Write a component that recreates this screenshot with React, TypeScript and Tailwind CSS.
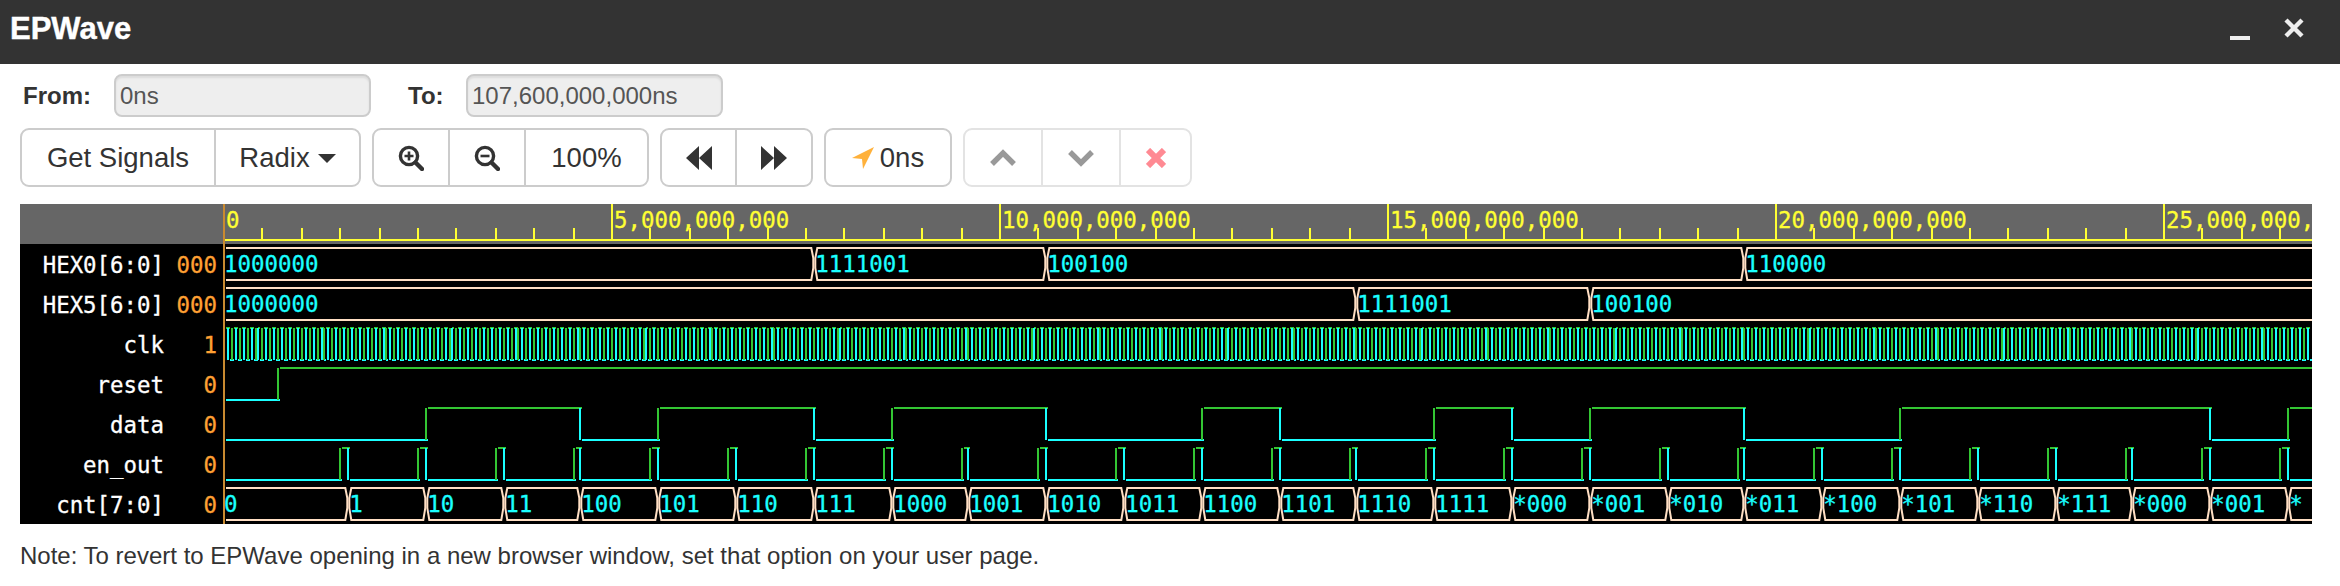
import React from "react"

const GREEN = "#33c633"
const CYAN = "#1affff"
const BUS = "#ffdfc4"
const YELLOW = "#ffff33"

const snap = (x: number) => Math.round(x / 2) * 2
const edgeAt = (i: number) => snap(224 + 3.88 * i)
const boundary = (k: number) => edgeAt(32 + 20 * k)

const END = 2312

// a digital row: edges are half-clock indexes, value toggles on each one
const DigitalWave = ({ row, start, edges }: { row: number; start: 0 | 1; edges: number[] }) => {
  const hi = 248 + row * 40
  const lo = 280 + row * 40
  const xs = edges.map(edgeAt)
  const parts: React.ReactNode[] = []
  let val = start
  let from = 226
  xs.forEach((x, n) => {
    const y = val ? hi : lo
    parts.push(<rect key={"h" + n} x={from} y={y - 1} width={x + 2 - from} height={2} fill={val ? GREEN : CYAN} />)
    parts.push(<rect key={"v" + n} x={x - 1} y={hi} width={2} height={lo - hi} fill={val ? CYAN : GREEN} />)
    from = x + 2
    val = val ? 0 : 1
  })
  const y = val ? hi : lo
  parts.push(<rect key="tail" x={from} y={y - 1} width={END - from} height={2} fill={val ? GREEN : CYAN} />)
  return <g shapeRendering="crispEdges">{parts}</g>
}

const BusWave = ({ row, values, at }: { row: number; values: string[]; at: number[] }) => {
  const y0 = 248 + row * 40
  const y1 = 280 + row * 40
  return (
    <g>
      {values.map((v, n) => {
        const a = n === 0 ? null : at[n - 1] + 0.3
        const b = n < at.length ? at[n] + 0.3 : null
        let d = a === null ? `M226 ${y0}` : `M${a + 3} ${y0}`
        d += b === null ? ` L${END + 4} ${y0} L${END + 4} ${y1}` : ` L${b - 3} ${y0} L${b - 1} ${y0 + 10} L${b - 1} ${y0 + 20} L${b - 3} ${y1}`
        d += a === null ? ` L226 ${y1}` : ` L${a + 3} ${y1} L${a + 1} ${y0 + 20} L${a + 1} ${y0 + 10} Z`
        return (
          <g key={n}>
            <path d={d} fill="none" stroke={BUS} strokeWidth={2} />
            <text x={a === null ? 224 : a + 1} y={y0 + 24} fill={CYAN} stroke={CYAN} strokeWidth={0.3} fontSize={22.4}>
              {v}
            </text>
          </g>
        )
      })}
    </g>
  )
}

const clkEdges = Array.from({ length: 537 }, (_, i) => i + 1)
const enEdges = Array.from({ length: 26 }, (_, k) => [30 + 20 * k, 32 + 20 * k]).flat()
const dataEdges = [1, 3, 4, 6, 7, 9, 11, 12, 14, 15, 16, 18, 20, 24, 25].map((k) => 32 + 20 * k)
const cntValues = ["0", "1", "10", "11", "100", "101", "110", "111", "1000", "1001", "1010", "1011", "1100", "1101", "1110", "1111", "*000", "*001", "*010", "*011", "*100", "*101", "*110", "*111", "*000", "*001", "*"]

const signals = [
  ["HEX0[6:0]", "000"],
  ["HEX5[6:0]", "000"],
  ["clk", "1"],
  ["reset", "0"],
  ["data", "0"],
  ["en_out", "0"],
  ["cnt[7:0]", "0"],
]

const Waves = () => (
  <svg width={2089} height={320} viewBox="223 204 2089 320" className="block font-['DejaVu_Sans_Mono',monospace]">
    <rect x={223} y={204} width={2089} height={320} fill="#000" />
    <rect x={223} y={204} width={2089} height={40} fill="#666" />
    <g fill={YELLOW} stroke={YELLOW} strokeWidth={0.3} fontSize={22.4}>
      {["0", "5,000,000,000", "10,000,000,000", "15,000,000,000", "20,000,000,000", "25,000,000,"].map((s, i) => (
        <text key={s} x={226 + i * 388} y={228}>
          {s}
        </text>
      ))}
    </g>
    <g fill={YELLOW} shapeRendering="crispEdges">
      <rect x={224} y={239} width={2088} height={2} />
      {Array.from({ length: 55 }, (_, i) => {
        const x = snap(224 + i * 38.8)
        return i % 10 === 0 ? (
          <rect key={i} x={x - 1} y={204} width={2} height={36} />
        ) : (
          <rect key={i} x={x - 1} y={228} width={2} height={12} />
        )
      })}
    </g>
    <BusWave row={0} values={["1000000", "1111001", "100100", "110000"]} at={[6, 9, 18].map(boundary)} />
    <BusWave row={1} values={["1000000", "1111001", "100100"]} at={[13, 16].map(boundary)} />
    <DigitalWave row={2} start={1} edges={clkEdges} />
    <DigitalWave row={3} start={0} edges={[14]} />
    <DigitalWave row={4} start={0} edges={dataEdges} />
    <DigitalWave row={5} start={0} edges={enEdges} />
    <BusWave row={6} values={cntValues} at={Array.from({ length: 26 }, (_, k) => boundary(k))} />
    <rect x={223} y={204} width={2} height={320} fill="#c98a30" shapeRendering="crispEdges" />
  </svg>
)

const SegButton = ({ className, children }: { className: string; children: React.ReactNode }) => (
  <div className={`flex h-full items-center justify-center ${className}`}>{children}</div>
)

const ZoomIcon = ({ minus }: { minus?: boolean }) => (
  <svg width={26} height={26} viewBox="0 0 26 26" fill="none" stroke="#333" strokeWidth={3.4}>
    <circle cx={11} cy={11} r={8.6} />
    <path d="M17.5 17.5L24 24" strokeWidth={4.4} strokeLinecap="round" />
    <path d={minus ? "M6.5 11h9" : "M6.5 11h9M11 6.5v9"} strokeWidth={2.6} />
  </svg>
)

const App = () => {
  return (
    <div className="h-[586px] w-[2340px] overflow-hidden bg-white font-['Liberation_Sans',Arial,sans-serif] text-[#333]">
      <div className="flex h-16 items-start justify-between bg-[#333] pl-[10px] pr-[36px] text-white">
        <div className="mt-[11px] text-[31px] font-bold leading-[36px] [-webkit-text-stroke:0.4px_white]">EPWave</div>
        <div className="mt-[18px] flex gap-[34px]">
          <svg width={20} height={22} viewBox="0 0 20 22">
            <rect x={0} y={18} width={20} height={4} fill="#eee" />
          </svg>
          <svg width={20} height={20} viewBox="0 0 20 20">
            <path d="M2 2L18 18M18 2L2 18" stroke="#eee" strokeWidth={4.4} />
          </svg>
        </div>
      </div>

      <div className="mt-[10px] flex h-[43px] items-center pl-[23px] text-[24px]">
        <label className="w-[91px] font-bold">From:</label>
        <div className="flex h-full w-[257px] items-center rounded-lg border-2 border-[#ccc] bg-[#eee] pl-[4px] text-[#555] shadow-[inset_0_2px_2px_rgba(0,0,0,0.08)]">0ns</div>
        <label className="ml-[37px] w-[58px] font-bold">To:</label>
        <div className="flex h-full w-[257px] items-center rounded-lg border-2 border-[#ccc] bg-[#eee] pl-[4px] text-[#555] shadow-[inset_0_2px_2px_rgba(0,0,0,0.08)]">107,600,000,000ns</div>
      </div>

      <div className="mt-[11px] flex h-[59px] gap-[11px] pl-5 text-[27.5px]">
        <div className="flex w-[341px] divide-x-2 divide-[#ccc] rounded-[9px] border-2 border-[#ccc]">
          <SegButton className="w-[194px]">Get Signals</SegButton>
          <SegButton className="flex-1 gap-[8px]">
            Radix
            <span className="mt-[2px] h-0 w-0 border-x-[9px] border-t-[9px] border-x-transparent border-t-[#333]" />
          </SegButton>
        </div>
        <div className="flex w-[277px] divide-x-2 divide-[#ccc] rounded-[9px] border-2 border-[#ccc]">
          <SegButton className="w-[76px]">
            <ZoomIcon />
          </SegButton>
          <SegButton className="w-[76px]">
            <ZoomIcon minus />
          </SegButton>
          <SegButton className="flex-1">100%</SegButton>
        </div>
        <div className="flex w-[153px] divide-x-2 divide-[#ccc] rounded-[9px] border-2 border-[#ccc]">
          <SegButton className="w-[75px]">
            <svg width={26} height={24} viewBox="0 0 26 24" fill="#333">
              <path d="M13 0V24L0 12ZM26 0V24L13 12Z" />
            </svg>
          </SegButton>
          <SegButton className="flex-1">
            <svg width={26} height={24} viewBox="0 0 26 24" fill="#333">
              <path d="M0 0V24L13 12ZM13 0V24L26 12Z" />
            </svg>
          </SegButton>
        </div>
        <div className="flex w-[128px] items-center justify-center gap-[6px] rounded-[9px] border-2 border-[#ccc]">
          <svg width={22} height={22} viewBox="0 0 22 22" fill="#ffb13b">
            <path d="M22 0L0 11L10 12L11 22Z" />
          </svg>
          0ns
        </div>
        <div className="flex w-[229px] divide-x-2 divide-[#e3e3e3] rounded-[9px] border-2 border-[#e3e3e3]">
          <SegButton className="w-[78px]">
            <svg width={26} height={18} viewBox="0 0 26 18" fill="none" stroke="#999" strokeWidth={5.4}>
              <path d="M2 15L13 4L24 15" />
            </svg>
          </SegButton>
          <SegButton className="w-[78px]">
            <svg width={26} height={18} viewBox="0 0 26 18" fill="none" stroke="#999" strokeWidth={5.4}>
              <path d="M2 3L13 14L24 3" />
            </svg>
          </SegButton>
          <SegButton className="flex-1">
            <svg width={20} height={20} viewBox="0 0 20 20" fill="none" stroke="#ff8a93" strokeWidth={6}>
              <path d="M2 2L18 18M18 2L2 18" />
            </svg>
          </SegButton>
        </div>
      </div>

      <div className="ml-5 mt-[17px] flex h-[320px] w-[2292px]">
        <div className="w-[203px] bg-black font-['DejaVu_Sans_Mono',monospace] text-[22.4px] leading-[40px] [-webkit-text-stroke:0.3px]">
          <div className="h-10 bg-[#666]" />
          {signals.map(([name, value]) => (
            <div key={name} className="flex h-10 justify-end pr-[6px] pt-[1px]">
              <span className="text-white">{name}</span>
              <span className="w-[53px] text-right text-[#ffa033]">{value}</span>
            </div>
          ))}
        </div>
        <Waves />
      </div>

      <p className="ml-5 mt-[20px] text-[24px] leading-[24px]">Note: To revert to EPWave opening in a new browser window, set that option on your user page.</p>
    </div>
  )
}

export default App
